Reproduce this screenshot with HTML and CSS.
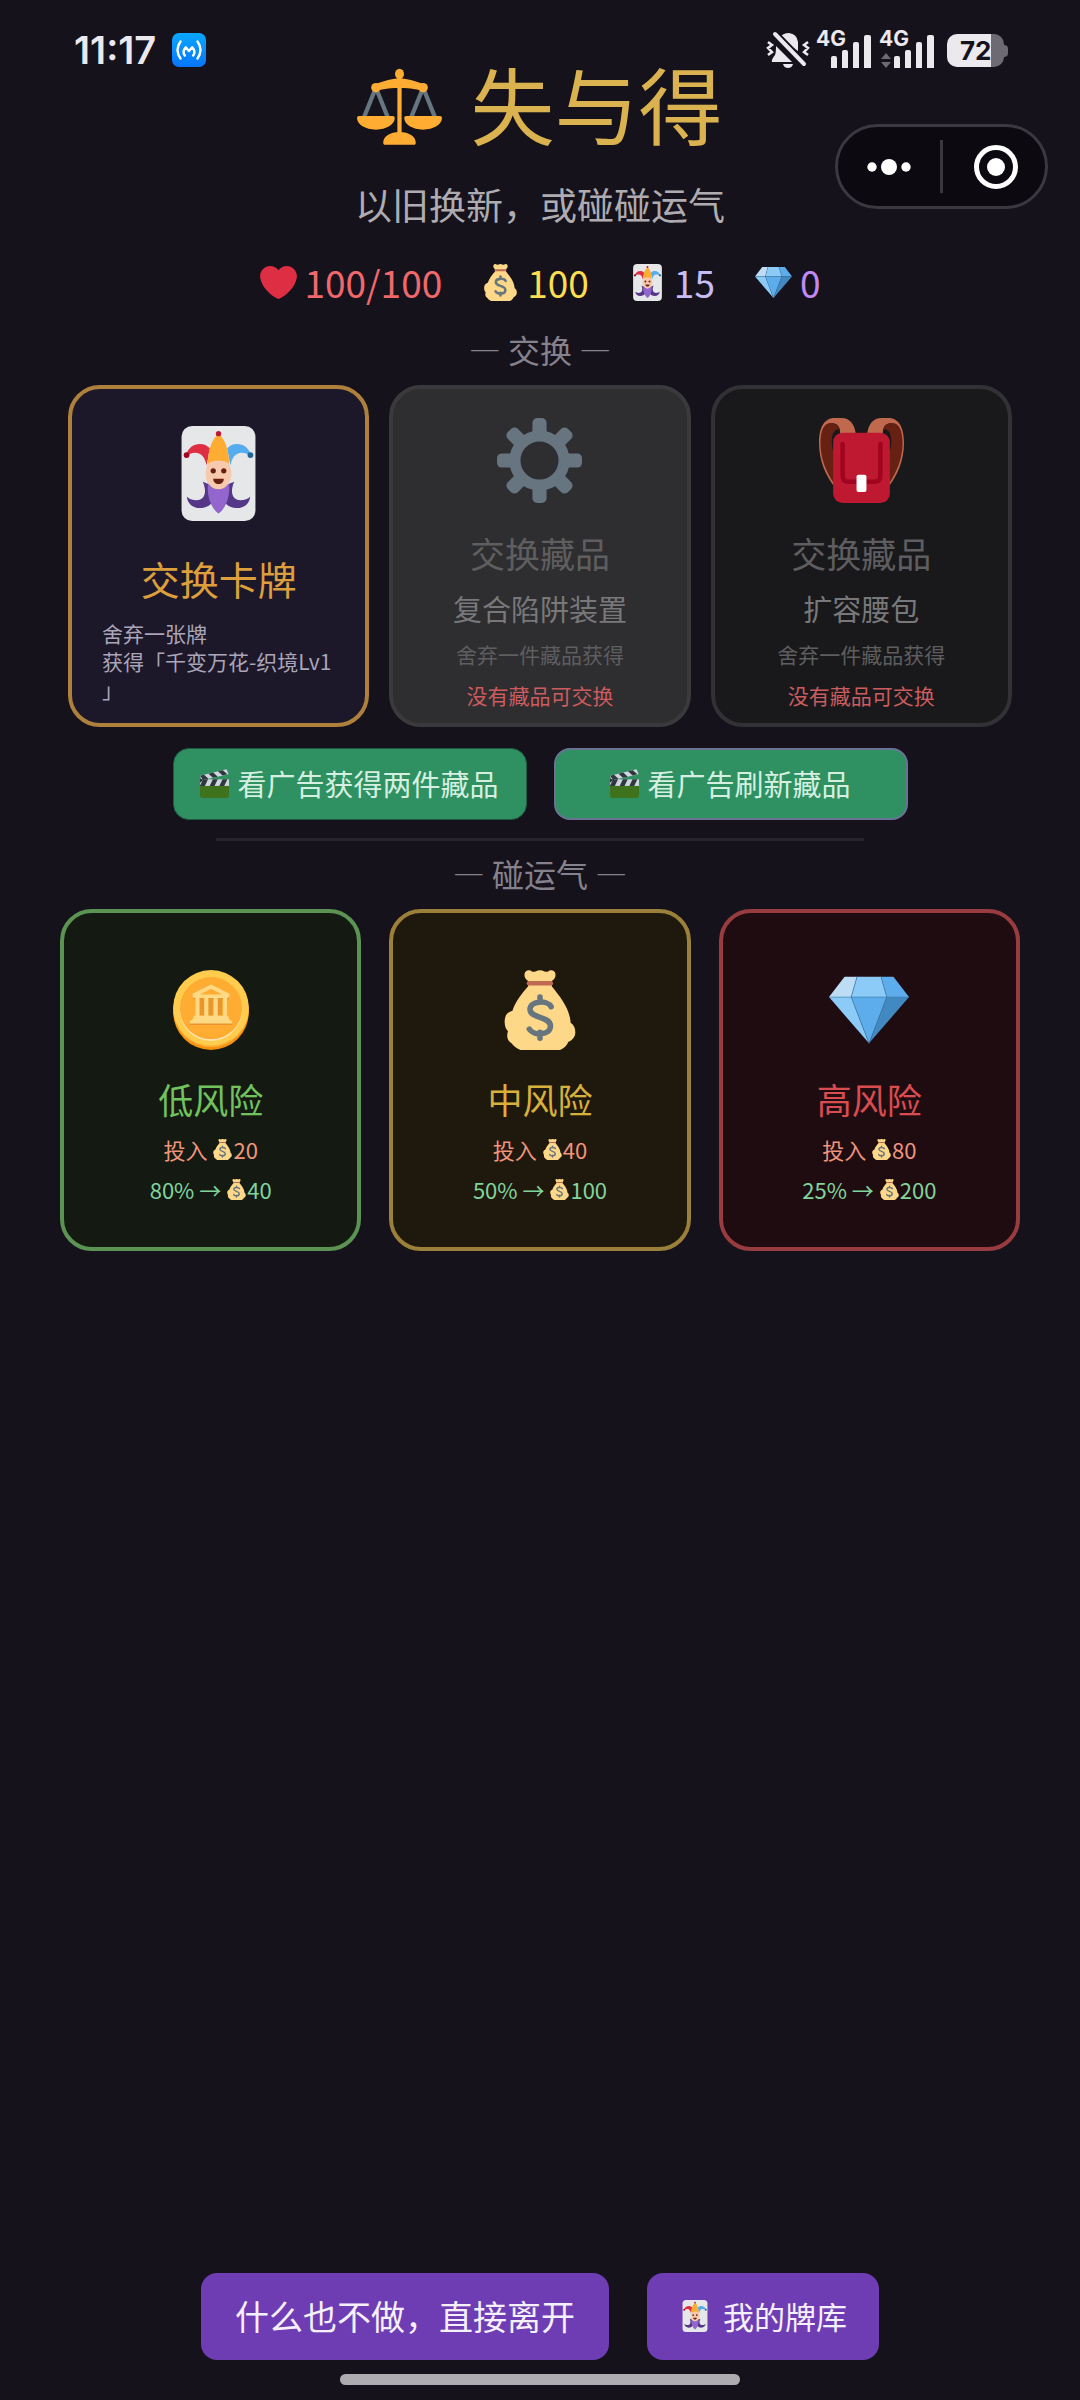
FILE: index.html
```html
<!DOCTYPE html>
<html lang="zh-CN">
<head>
<meta charset="utf-8">
<meta name="viewport" content="width=device-width, initial-scale=1">
<title>失与得</title>
<link rel="stylesheet" href="styles.css">
</head>
<body>
<svg class="sprite" aria-hidden="true">
  <symbol id="heart" viewBox="0 0 36 36"><path fill="#dd2e44" d="M35.885 11.833c0-5.45-4.418-9.868-9.867-9.868-3.308 0-6.227 1.633-8.018 4.129-1.791-2.496-4.71-4.129-8.017-4.129-5.45 0-9.868 4.417-9.868 9.868 0 .772.098 1.52.266 2.241C1.751 22.587 11.216 31.568 18 34.034c6.783-2.466 16.249-11.447 17.617-19.959.17-.721.268-1.469.268-2.242z"/></symbol>
  <symbol id="scales" viewBox="0 0 36 36">
    <path d="M7.6 11 3 22.5M8.4 11 13 22.5M27.6 11 23 22.5M28.4 11 33 22.5" stroke="#66757f" stroke-width="1.8" fill="none"/>
    <g fill="#ffac33"><ellipse cx="18" cy="4.2" rx="1.9" ry="2.2"/><path d="M7.5 8.6C13 6.7 15 6.1 18 6.1s5 .6 10.5 2.5v3C24 10.4 21 10.2 18 10.2s-6 .2-10.500 1.400z"/><circle cx="8" cy="10" r="2"/><circle cx="28" cy="10" r="2"/><path d="M17.100 5h1.800v25h-1.800z"/><path d="M11.100 33.300c0-2.600 3-4.500 6.900-4.500s6.900 1.900 6.900 4.500c0 .5-.3.900-.8.900H11.900c-.5 0-.8-.4-.8-.9z"/><path d="M0 22.800c0-.4.400-.8.800-.8h14.400c.4 0 .8.400.8.800 0 2.800-3.600 5-8 5s-8-2.200-8-5zM20 22.800c0-.4.400-.8.800-.8h14.400c.4 0 .8.400.8.800 0 2.800-3.600 5-8 5s-8-2.200-8-5z"/></g>
  </symbol>
  <symbol id="bag" viewBox="0 0 36 36">
    <path fill="#fdd888" d="M12.700 5C11 4 10.700 2.200 11.300 1c.6-1.200 2.400-1.200 3.300-.2C15.600 1 16.300.2 18 .1c1.700.1 2.400.9 3.400.7.9-1 2.700-1 3.300.2.600 1.200.3 3-1.400 4v2.300C27 12 31.300 17 31.800 23.700c1.400 1 2.100 2.300 2.100 4.300 0 2.300-1.500 3.600-3.100 4.300-.8 1.700-1.900 3-3.800 3.700H9.200c-1.600-.5-2.900-1.600-4-3-1.900-1.300-2.400-3-1.600-5.400C2.600 26.600 2 25 2.100 22.800c.1-2.300 1.300-3.900 3.500-4.500C7 14.200 9.800 10.500 12.700 7.300z"/>
    <rect x="12" y="5" width="11.900" height="2" rx="1" fill="#bf6952"/>
    <path d="M23 16.500C21.500 13.500 13.500 13.700 13.500 17.700c0 4.300 9.200 2.900 9.200 7.500 0 4.500-7.700 4.400-9.500 1.400M18 12.200v2M18 28v2.700" fill="none" stroke="#67757f" stroke-width="2.500" stroke-linecap="round"/>
  </symbol>
  <symbol id="joker" viewBox="0 0 36 36">
    <rect x="4" width="28" height="36" rx="4" fill="#e6e7e8"/>
    <path fill="#dd2e44" d="M5.700 10.900C6.500 8.300 8.500 6.800 11 6.800c1.500 0 2.700.6 3.700 1.600l-1.200 6.600c-.6-3-1.900-4.900-4.300-4.900-1.300 0-2.200.3-2.800 1z"/>
    <path fill="#55acee" d="M30.300 10.900C29.500 8.300 27.500 6.800 25 6.800c-1.500 0-2.700.6-3.700 1.600l1.200 6.600c.6-3 1.900-4.900 4.300-4.900 1.300 0 2.200.3 2.800 1z"/>
    <path fill="#553788" d="M6 26.700c.2 2.600 2.200 4.400 5 4.400 2.400 0 3.600-1 5-2.400L14.500 22c-.8-.2-1.600-.5-2.500-1 1.700 3.600 1 7-2.200 7.100-1.700 0-3-.4-3.800-1.400zM30 26.700c-.2 2.600-2.200 4.400-5 4.400-2.400 0-3.600-1-5-2.400l1.500-6.700c.8-.2 1.600-.5 2.500-1-1.700 3.600-1 7 2.200 7.100 1.700 0 3-.4 3.800-1.400z"/>
    <path fill="#9266cc" d="M14 22h8c.5 5-1.500 9.500-4 11.200C15.500 31.500 13.500 27 14 22z"/>
    <ellipse cx="18" cy="18" rx="4.900" ry="6" fill="#f7c9ad"/>
    <path fill="#ffac33" d="M14 14.300C14 9 15.500 5 18 2.900c2.500 2.100 4 6.100 4 11.400-2-1.600-6-1.600-8 0z"/>
    <circle cx="18" cy="2.900" r="1" fill="#be1931"/><circle cx="5.900" cy="11" r="1.100" fill="#a0041e"/><circle cx="30.100" cy="11" r="1.100" fill="#226699"/>
    <circle cx="16" cy="17" r="1" fill="#662113"/><circle cx="20" cy="17" r="1" fill="#662113"/><path d="M16 20h4c0 1.200-.8 2-2 2s-2-.8-2-2z" fill="#662113"/>
  </symbol>
  <symbol id="gem" viewBox="0 0 36 36">
    <path fill="#bdddf4" d="M7 3h5.600L10 12.200H0z"/><path fill="#8ccaf7" d="M12.600 3h10.800L26 12.200H10z"/><path fill="#5dadec" d="M23.400 3H29l7 9.200H26z"/>
    <path fill="#8ccaf7" d="M0 12.200h10L18 33z"/><path fill="#5dadec" d="M10 12.200h16L18 33z"/><path fill="#4289c1" d="M26 12.200h10L18 33z"/>
    <path d="M0 12.200h36M12.600 3 10 12.200 18 33l8-20.800L23.400 3" fill="none" stroke="#3c7ba8" stroke-width=".3"/>
  </symbol>
  <symbol id="gear" viewBox="0 0 36 36">
    <g fill="#66757f"><rect id="tooth" x="15" width="6" height="8" rx="2"/><use href="#tooth" transform="rotate(45 18 18)"/><use href="#tooth" transform="rotate(90 18 18)"/><use href="#tooth" transform="rotate(135 18 18)"/><use href="#tooth" transform="rotate(180 18 18)"/><use href="#tooth" transform="rotate(225 18 18)"/><use href="#tooth" transform="rotate(270 18 18)"/><use href="#tooth" transform="rotate(315 18 18)"/></g>
    <circle cx="18" cy="18" r="10.400" fill="none" stroke="#66757f" stroke-width="4.700"/>
  </symbol>
  <symbol id="backpack" viewBox="0 0 36 36">
    <g id="strap"><path fill="#c1694f" d="M15.600 7C15.200 2.500 13 0 9.500 0H6.500C2 0 0 4.500 0 10.500 0 18 2.800 24.500 6.500 29V27C3.500 22 1.200 17 1.200 10.500 1.200 5 3 2.200 6 2.200 8.500 2.400 9 4.500 9 7z"/><path fill="#662113" d="M.6 10.500C.6 4.500 2.600 2.100 5 2.100c2 0 3.400 1 3.900 3-1.900-1.200-3.500 1.400-3.500 4.500 0 2.500.3 4 1.100 5.500V28C3 23 .6 17 .6 10.500z"/></g>
    <use href="#strap" transform="matrix(-1 0 0 1 36 0)"/>
    <rect x="6" y="6.200" width="24" height="29.800" rx="4" fill="#be1931"/>
    <path d="M10 11v13.500q0 2.500 2.500 2.500h11q2.500 0 2.500-2.500V11" fill="none" stroke="#a0041e" stroke-width="1.900" stroke-linecap="round"/>
    <rect x="15.900" y="24" width="4.200" height="7.300" rx=".8" fill="#fff"/>
  </symbol>
  <symbol id="coin" viewBox="0 0 36 36">
    <circle cx="18" cy="19" r="17" fill="#f4900c"/><circle cx="18" cy="17.800" r="17" fill="#ffac33"/><circle cx="18" cy="17" r="17" fill="#ffcc4d"/><circle cx="18" cy="17.900" r="14" fill="#ffe8b6"/><circle cx="18" cy="17.200" r="14" fill="#ffac33"/>
    <path fill="#e8962e" d="M8.500 23.500h19v1.200h-19zM10 12h16v1.200H10zM12.800 13h2v7.500h-2zM16.800 13h2v7.500h-2zM21 13h2v7.500h-2z"/>
    <path fill="#ffd983" d="M18 6.500 9.700 10.700v.9c0 .6.400 1 1 1h14.600c.6 0 1-.4 1-1v-.9zm0 1.900 5 2.600H13zM11 12.600h1.800v8H11zM15 12.600h1.800v8H15zM19.200 12.600H21v8h-1.800zM23.400 12.600h1.800v8h-1.800zM10.200 20.600h15.600l.4 1.700 1.300.7v1.100h-19V23l1.300-.7z"/>
  </symbol>
  <symbol id="clapper" viewBox="0 0 36 36">
    <path fill="#3e721d" d="M0 21h36v12a3 3 0 0 1-3 3H3a3 3 0 0 1-3-3z"/><path fill="#ccd6dd" d="M0 12.800h36V21H0z"/>
    <path fill="#31373d" d="M4 12.800h6L6 21H0v-.5zM16 12.800h6L18 21h-6zM28 12.800h6L30 21h-6z"/>
    <path fill="#ccd6dd" d="M0 8.500 33 .2l2.500 6.300L2 14z"/><path fill="#31373d" d="m0 8.500 5-1.300 5.500 5L4 13.600zM10.500 5.900l6-1.500 5.500 5.100-6 1.400zM22.300 2.900l6-1.500 5.700 5.200-6 1.500z"/>
    <path fill="#31373d" d="M0 12 5 13 0 17z"/>
  </symbol>
</svg>

<header class="status-bar">
  <div class="status-group">
    <time class="clock">11:17</time>
    <svg class="app-badge" viewBox="0 0 34 34" aria-hidden="true"><defs><linearGradient id="blue" x2="0" y2="1"><stop stop-color="#09a8ff"/><stop offset="1" stop-color="#0875fb"/></linearGradient></defs><rect width="34" height="34" rx="7" fill="url(#blue)"/><path d="M8.500 8.500q-6 8.500 0 17M25.500 8.500q6 8.500 0 17M12.800 22.500q-3-4 1-8.200L17 18l3.200-3.700q4 4.200 1 8.200" fill="none" stroke="#fff" stroke-width="2.400" stroke-linecap="round" stroke-linejoin="round"/></svg>
  </div>
  <div class="status-group">
    <svg class="mute" viewBox="0 0 44 38" aria-hidden="true"><g fill="#ebe9ee"><path d="M13 7q4-5 10-5 8 1 9 9v9zM10 15 26 31H6q-1-2 3-7 1-2 1-9zM17 33h10q-1 4-5 4t-5-4z"/></g><path d="m9 3 29 30" stroke="#15121b" stroke-width="8"/><path d="m9 3 29 30" stroke="#ebe9ee" stroke-width="4" stroke-linecap="round"/><path d="m2 11 4 3-4 3 4 4-4 3M42 11l-4 3 4 3-4 4 4 3" fill="none" stroke="#ebe9ee" stroke-width="2.500"/></svg>
    <div class="signal"><span>4G</span><svg viewBox="0 0 60 38" aria-hidden="true"><path fill="#ebe9ee" d="M15 27a2 2 0 0 1 2-2h2a2 2 0 0 1 2 2v10h-6zM26 21a2 2 0 0 1 2-2h2a2 2 0 0 1 2 2v16h-6zM37 13a2 2 0 0 1 2-2h2a2 2 0 0 1 2 2v24h-6zM48 6a2 2 0 0 1 2-2h3a2 2 0 0 1 2 2v31h-7z"/></svg></div>
    <div class="signal"><span>4G</span><svg viewBox="0 0 60 38" aria-hidden="true"><path fill="#6d6a73" d="m2 28 5-6 5 6zM2 31h10l-5 6z"/><path fill="#ebe9ee" d="M15 27a2 2 0 0 1 2-2h2a2 2 0 0 1 2 2v10h-6zM26 21a2 2 0 0 1 2-2h2a2 2 0 0 1 2 2v16h-6zM37 13a2 2 0 0 1 2-2h2a2 2 0 0 1 2 2v24h-6zM48 6a2 2 0 0 1 2-2h3a2 2 0 0 1 2 2v31h-7z"/></svg></div>
    <div class="battery">72</div>
  </div>
</header>

<div class="capsule">
  <button type="button" aria-label="更多"><svg viewBox="0 0 44 44" aria-hidden="true"><g fill="#fff"><circle cx="5" cy="22" r="4.700"/><circle cx="22" cy="22" r="8"/><circle cx="39" cy="22" r="4.700"/></g></svg></button>
  <button type="button" class="close" aria-label="关闭"><svg viewBox="0 0 44 44" aria-hidden="true"><circle cx="22" cy="22" r="19.500" fill="none" stroke="#fff" stroke-width="5"/><circle cx="22" cy="22" r="9" fill="#fff"/></svg></button>
</div>

<main class="game">
  <h1 class="title"><svg class="icon-m"><use href="#scales"/></svg>失与得</h1>
  <p class="subtitle">以旧换新，或碰碰运气</p>
  <ul class="stats">
    <li class="hp"><svg><use href="#heart"/></svg>100/100</li>
    <li class="gold"><svg><use href="#bag"/></svg>100</li>
    <li class="deck"><svg><use href="#joker"/></svg>15</li>
    <li class="gems"><svg><use href="#gem"/></svg>0</li>
  </ul>

  <h2 class="section">— 交换 —</h2>
  <div class="cards trades">
    <button type="button" class="card swap">
      <svg class="icon-l"><use href="#joker"/></svg>
      <span class="card-title">交换卡牌</span>
      <span class="desc">舍弃一张牌<br>获得「千变万花-织境Lv1」</span>
    </button>
    <button type="button" class="card locked lit" disabled>
      <svg class="icon-m"><use href="#gear"/></svg>
      <span class="card-title">交换藏品</span>
      <span class="item">复合陷阱装置</span>
      <span class="note">舍弃一件藏品获得</span>
      <span class="error">没有藏品可交换</span>
    </button>
    <button type="button" class="card locked" disabled>
      <svg class="icon-m"><use href="#backpack"/></svg>
      <span class="card-title">交换藏品</span>
      <span class="item">扩容腰包</span>
      <span class="note">舍弃一件藏品获得</span>
      <span class="error">没有藏品可交换</span>
    </button>
  </div>

  <div class="ads">
    <button type="button" class="ad"><svg><use href="#clapper"/></svg>看广告获得两件藏品</button>
    <button type="button" class="ad outlined"><svg><use href="#clapper"/></svg>看广告刷新藏品</button>
  </div>
  <hr class="divider">

  <h2 class="section">— 碰运气 —</h2>
  <div class="cards risks">
    <button type="button" class="card risk low">
      <svg class="icon-s"><use href="#coin"/></svg>
      <span class="card-title">低风险</span>
      <span class="cost">投入 <svg><use href="#bag"/></svg>20</span>
      <span class="reward">80% → <svg><use href="#bag"/></svg>40</span>
    </button>
    <button type="button" class="card risk mid">
      <svg class="icon-s"><use href="#bag"/></svg>
      <span class="card-title">中风险</span>
      <span class="cost">投入 <svg><use href="#bag"/></svg>40</span>
      <span class="reward">50% → <svg><use href="#bag"/></svg>100</span>
    </button>
    <button type="button" class="card risk high">
      <svg class="icon-s"><use href="#gem"/></svg>
      <span class="card-title">高风险</span>
      <span class="cost">投入 <svg><use href="#bag"/></svg>80</span>
      <span class="reward">25% → <svg><use href="#bag"/></svg>200</span>
    </button>
  </div>
</main>

<footer class="actions">
  <button type="button" class="action">什么也不做，直接离开</button>
  <button type="button" class="action library"><svg><use href="#joker"/></svg>我的牌库</button>
</footer>
<div class="home-bar"></div>
</body>
</html>
```
FILE: styles.css
```css
* { box-sizing: border-box; }

body {
  margin: 0;
  min-height: 100vh;
  position: relative;
  display: flex;
  flex-direction: column;
  background: #15121b;
  color: #fff;
  font-family: "Noto Sans CJK SC", sans-serif;
  font-weight: 400;
}

button {
  margin: 0;
  padding: 0;
  border: 0;
  background: none;
  color: inherit;
  font: inherit;
}

h1, h2, p, ul { margin: 0; padding: 0; font-weight: inherit; }
svg { flex: none; }
.sprite { position: absolute; width: 0; height: 0; }

.icon-s { width: 80px; height: 80px; }
.icon-m { width: 85px; height: 85px; }
.icon-l { width: 95px; height: 95px; }

/* System overlays */
.status-bar {
  position: absolute;
  top: 30px;
  left: 0;
  right: 0;
  display: flex;
  justify-content: space-between;
  padding: 0 76px 0 74px;
  color: #ebe9ee;
  font-family: Inter, sans-serif;
  font-weight: 700;
}
.status-group { display: flex; align-items: center; height: 40px; }
.clock { font-size: 38px; line-height: 40px; margin-right: 16px; font-weight: 600; }
.app-badge { width: 34px; height: 34px; }
.mute { width: 44px; height: 38px; margin-right: 6px; }
.signal { position: relative; width: 60px; height: 38px; margin-right: 3px; }
.signal svg { display: block; width: 60px; height: 38px; }
.signal span { position: absolute; top: 0; left: 0; font-size: 21px; line-height: 16px; }
.battery {
  position: relative;
  width: 57px;
  height: 33px;
  margin-left: 5px;
  padding-left: 13px;
  border-radius: 10px;
  background: linear-gradient(to right, #ebe9ee 44px, #6d6a73 44px);
  color: #15121b;
  font-size: 26px;
  line-height: 34px;
}
.battery::after {
  content: "";
  position: absolute;
  left: 57px;
  top: 11px;
  width: 4px;
  height: 12px;
  border-radius: 0 4px 4px 0;
  background: #6d6a73;
}

.capsule {
  position: absolute;
  top: 124px;
  right: 32px;
  display: grid;
  grid-template-columns: 102px 1fr;
  width: 213px;
  height: 85px;
  border: 3px solid #3b3940;
  border-radius: 43px;
  background: #0c0a10;
}
.capsule button { display: flex; align-items: center; justify-content: center; }
.capsule .close { position: relative; padding-left: 6px; }
.capsule .close::before {
  content: "";
  position: absolute;
  left: 0;
  top: 13px;
  bottom: 13px;
  width: 3px;
  background: #3b3940;
}
.capsule svg { width: 44px; height: 44px; }

.home-bar {
  position: absolute;
  left: 50%;
  bottom: 15px;
  width: 400px;
  height: 11px;
  margin-left: -200px;
  border-radius: 6px;
  background: #aeacb0;
}

/* Heading */
.game { padding-top: 64px; }
.title {
  display: flex;
  align-items: flex-start;
  justify-content: center;
  gap: 28px;
  color: #dab24f;
  font-size: 84px;
  line-height: 78px;
}
.subtitle {
  margin-top: 35px;
  color: #aeacb1;
  font-size: 37px;
  line-height: 40px;
  text-align: center;
}
.stats {
  display: flex;
  justify-content: center;
  gap: 40px;
  margin-top: 38px;
  list-style: none;
  font-size: 37px;
  line-height: 40px;
}
.stats li { display: flex; align-items: center; gap: 8px; }
.stats svg { width: 37px; height: 37px; }
.hp { color: #f0686c; }
.gold { color: #fbdf50; }
.deck { color: #c8bcf5; }
.gems { color: #c08af5; }

.section {
  margin: 31px 0 20px;
  color: #85818d;
  font-size: 32px;
  line-height: 32px;
  text-align: center;
}

/* Cards */
.cards { display: grid; grid-template-columns: repeat(3, 1fr); }
.trades { gap: 20px; padding: 0 68px; }
.risks { gap: 28px; padding: 0 60px; }
.card {
  display: flex;
  flex-direction: column;
  align-items: center;
  min-height: 342px;
  border: 4px solid;
  border-radius: 32px;
}
.card-title { font-size: 35px; line-height: 40px; }

.swap { padding: 37px 30px 0; border-color: #ad803c; background: #1d172a; }
.swap .card-title { margin-top: 33px; color: #dc9f3c; font-size: 39px; line-height: 48px; }
.desc {
  align-self: stretch;
  margin-top: 17px;
  color: #aaa6b8;
  font-size: 21px;
  line-height: 28px;
  text-align: left;
  line-break: anywhere;
}

.locked { padding: 29px 10px 0; border-color: #323135; background: #19191b; }
.locked.lit { border-color: #3a393c; background: #2e2d2f; }
.locked .card-title { margin-top: 30px; color: #5e5e60; }
.item { margin-top: 17px; color: #78787a; font-size: 29px; line-height: 36px; }
.note { margin-top: 14px; color: #5e5e60; font-size: 21px; line-height: 28px; }
.error { margin-top: 13px; color: #cb5c5f; font-size: 21px; line-height: 28px; }

.risk { padding: 57px 10px 0; }
.risk .card-title { margin-top: 29px; }
.low { border-color: #5b9452; background: #141a12; }
.low .card-title { color: #72c25e; }
.mid { border-color: #9a8038; background: #1f180d; }
.mid .card-title { color: #d8b03c; }
.high { border-color: #983c40; background: #1f0c10; }
.high .card-title { color: #d94c50; }
.cost, .reward { display: flex; align-items: center; font-size: 22px; line-height: 28px; white-space: pre; }
.cost { margin-top: 16px; color: #f0957c; }
.reward { margin-top: 12px; color: #80d49c; }
.cost svg, .reward svg { width: 21px; height: 21px; }

/* Ad buttons */
.ads { display: flex; justify-content: center; gap: 27px; margin-top: 21px; }
.ad {
  display: flex;
  align-items: center;
  justify-content: center;
  gap: 8px;
  width: 354px;
  height: 72px;
  padding-bottom: 2px;
  border: 1px solid #1e5b43;
  border-radius: 16px;
  background: #2f9161;
  color: #d5f0e0;
  font-size: 29px;
}
.ad.outlined { border: 2px solid #6b7395; }
.ad svg { width: 29px; height: 29px; }
.divider {
  width: 60%;
  height: 3px;
  margin: 18px auto 0;
  border: 0;
  background: #26242e;
}
.divider + .section { margin-top: 16px; }

/* Bottom actions */
.actions {
  display: flex;
  justify-content: center;
  gap: 38px;
  margin-top: auto;
  padding: 40px 0;
}
.action {
  display: flex;
  align-items: center;
  justify-content: center;
  height: 87px;
  padding: 0 34px 2px;
  border-radius: 16px;
  background: #6f3db3;
  color: #f5f0fc;
  font-size: 34px;
}
.library { gap: 12px; padding: 0 32px 2px; font-size: 31px; }
.library svg { width: 32px; height: 32px; }
```
